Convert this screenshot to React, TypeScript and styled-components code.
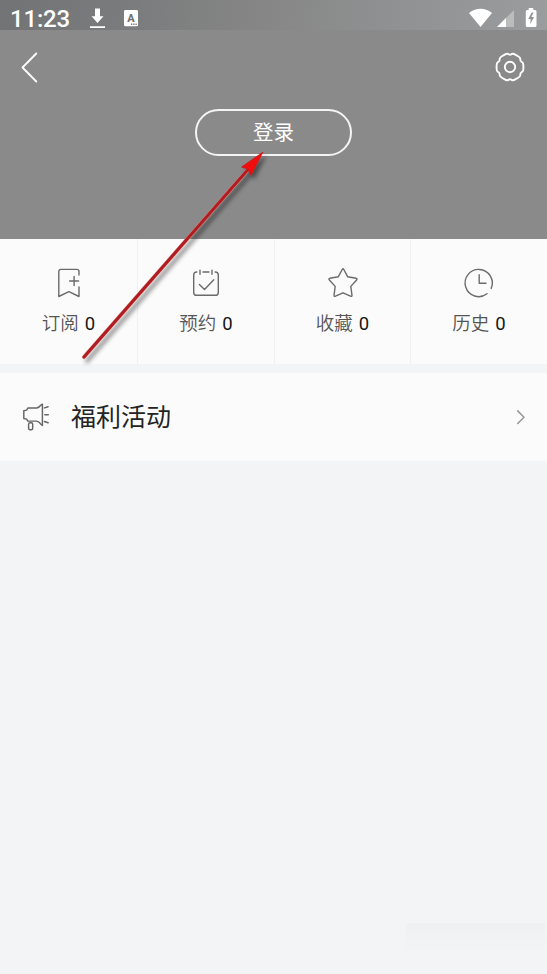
import React from 'react';
import styled, { createGlobalStyle } from 'styled-components';

const GlobalStyle = createGlobalStyle`
  * { box-sizing: border-box; }
  body {
    margin: 0;
    background: #f2f4f6;
    font-family: Roboto, "Noto Sans CJK SC", sans-serif;
  }
  svg { display: block; flex: none; overflow: visible; }
`;

const Screen = styled.main`
  position: relative;
  display: flex;
  flex-direction: column;
  width: 547px;
  height: 974px;
  overflow: hidden;
  background: #f2f4f6;
`;

const StatusBar = styled.header`
  display: flex;
  align-items: center;
  height: 30px;
  padding: 0 10px;
  background: linear-gradient(100deg, #727374 0%, #7b7c7d 25%, #868686 48%, #909192 72%, #9b9c9d 100%);
  color: #fff;
`;

const Clock = styled.span`
  width: 78px;
  padding-top: 8px;
  font-size: 24px;
  line-height: 30px;
  font-weight: 500;
  letter-spacing: -0.2px;
  white-space: nowrap;
`;

const StatusIcons = styled.div`
  display: flex;
  flex: 1;
  justify-content: space-between;
`;

const Hero = styled.section`
  display: flex;
  flex-direction: column;
  align-items: center;
  height: 209px;
  background: #8a8a8a;
`;

const NavBar = styled.nav`
  display: flex;
  align-items: center;
  justify-content: space-between;
  width: 100%;
  height: 74px;
  padding: 0 22px 1px 20px;
`;

const IconButton = styled.button`
  padding: 0;
  border: 0;
  background: none;
  color: #fff;
`;

const LoginButton = styled.button`
  width: 157px;
  height: 47px;
  margin-top: 5px;
  padding: 0;
  border: 2px solid #f4f4f4;
  border-radius: 24px;
  background: none;
  color: #fff;
  font: 400 20.5px/40px Roboto, "Noto Sans CJK SC", sans-serif;
`;

const Stats = styled.section`
  display: grid;
  grid-template-columns: 138px 137px 136px 136px;
  height: 125px;
  background: #fbfbfb;
`;

const Stat = styled.div`
  display: flex;
  flex-direction: column;
  align-items: center;
  padding-top: 28px;
  border-right: 1px solid #eff0f1;
  color: #6b6b6b;
  &:last-child { border-right: 0; }
`;

const StatLabel = styled.div`
  display: flex;
  gap: 6px;
  margin-top: 12px;
  font-size: 18.5px;
  line-height: 26px;
  font-weight: 350;
  color: #555;
`;

const Count = styled.span`
  color: #161616;
  font-weight: 400;
`;

const MenuRow = styled.section`
  display: flex;
  align-items: center;
  height: 88px;
  margin-top: 9px;
  padding: 0 21px 0 22px;
  background: #fbfbfb;
  color: #666;
`;

const MenuTitle = styled.span`
  flex: 1;
  margin-left: 21px;
  padding-top: 2px;
  font-size: 25px;
  line-height: 36px;
  color: #242424;
`;

const FadedPatch = styled.div`
  width: 139px;
  height: 48px;
  margin: auto 2px 3px auto;
  background: linear-gradient(#eef0f1, #f2f4f5 65%);
`;

const PointerArrow = styled.svg`
  position: absolute;
  top: 0;
  left: 0;
  pointer-events: none;
`;

const strokeProps = {
  fill: 'none',
  stroke: 'currentColor',
  strokeLinecap: 'round',
  strokeLinejoin: 'round',
} as const;

const gearPoints = Array.from({ length: 6 }, (_, lobe) =>
  [
    [-17, 14],
    [17, 14],
    [30, 12],
  ].map(([offset, radius]) => {
    const a = ((lobe * 60 + offset) * Math.PI) / 180;
    return [15 + radius * Math.cos(a), 15 + radius * Math.sin(a)];
  }),
).flat();

const gearPath =
  gearPoints
    .map(([x, y], i) => {
      const [px, py] = gearPoints[(i + gearPoints.length - 1) % gearPoints.length];
      const [nx, ny] = gearPoints[(i + 1) % gearPoints.length];
      const k = 0.36;
      const start = `${(x + (px - x) * k).toFixed(2)} ${(y + (py - y) * k).toFixed(2)}`;
      const end = `${(x + (nx - x) * k).toFixed(2)} ${(y + (ny - y) * k).toFixed(2)}`;
      return `${i ? 'L' : 'M'}${start}Q${x.toFixed(2)} ${y.toFixed(2)} ${end}`;
    })
    .join('') + 'Z';

const BackIcon = () => (
  <svg width="20" height="32" viewBox="0 0 20 32" {...strokeProps} strokeWidth="1.8">
    <path d="M16.3 2.5 2.5 16.5 16.3 30.5" />
  </svg>
);

const GearIcon = () => (
  <svg width="30" height="30" viewBox="0 0 30 30" {...strokeProps} strokeWidth="1.9">
    <path d={gearPath} />
    <circle cx="15" cy="15" r="5.2" />
  </svg>
);

const BookmarkIcon = () => (
  <svg width="28" height="32" viewBox="0 0 28 32" {...strokeProps} strokeWidth="1.4">
    <path d="M24 8V4.5Q24 2.4 21.8 2.4H6Q3.8 2.4 3.8 4.6V29.5L13.9 24.6 24 29.5V20M19.1 9.5V18.5M14.6 14H23.6" />
  </svg>
);

const CalendarIcon = () => (
  <svg width="28" height="32" viewBox="0 0 28 32" {...strokeProps} strokeWidth="1.4">
    <path d="M4.8 5Q1.7 5 1.7 8.1V25.4Q1.7 28.3 4.6 28.3H23.4Q26.3 28.3 26.3 25.4V8.1Q26.3 5 23.2 5M11 5H17M8 3.1V7.3M20 3.1V7.3M7.4 17.6 12.5 22.6 21.8 12.8" />
  </svg>
);

const StarIcon = () => (
  <svg width="30" height="32" viewBox="0 0 30 32" {...strokeProps} strokeWidth="1.4">
    <path d="M14.2 2.5Q15 1 15.8 2.5L19.6 9.7 28.2 11.3Q29.8 11.8 28.6 13L22.8 19.4 24 28.3Q24 29.9 22.5 29.2L15 25.8 7.5 29.2Q6 29.9 6 28.3L7.2 19.4 1.4 13Q.2 11.8 1.8 11.3L10.4 9.7Z" />
  </svg>
);

const HistoryIcon = () => (
  <svg width="28" height="32" viewBox="0 0 28 32" {...strokeProps} strokeWidth="1.4">
    <path d="M22 26.8A13.6 13.6 0 1 1 26.2 21.4M14.2 7.7V16.3H21" />
  </svg>
);

const MegaphoneIcon = () => (
  <svg width="28" height="30" viewBox="0 0 28 30" {...strokeProps} strokeWidth="1.45">
    <path d="M6 6H14.7Q17.5 5.3 18.8 3.1L20.4 2.2V23.5L18.8 22.2Q17.5 19.9 14.7 19.1H5.8L4.6 17.1 1.8 16.5V8.7L4.6 8.1ZM22.4 5.9 26.1 4.8M22.8 12.8H26.3M22.4 19.5 26.1 20.7" />
    <rect x="6.6" y="20.8" width="4.1" height="7" rx="1.5" />
  </svg>
);

const ChevronIcon = () => (
  <svg width="10" height="16" viewBox="0 0 10 16" {...strokeProps} stroke="#999" strokeWidth="1.6">
    <path d="M1.7 1.9 8 8.2 1.7 14.5" />
  </svg>
);

const NotificationIcons = () => (
  <svg width="52" height="30" viewBox="88 0 52 30" fill="#fff">
    <path d="M95 8.5H100V16.2H103.5L97.5 23 91.5 16.2H95ZM90 26.3H105V28H90Z" />
    <rect x="124" y="10" width="14" height="16.3" rx="1.4" />
    <text x="130.9" y="22" textAnchor="middle" fill="#707070" fontFamily="Roboto" fontSize="11" fontWeight="800">A</text>
    <path d="M131 23.6H132.3V24.9H131ZM133.3 23.6H134.6V24.9H133.3ZM135.5 23.6H136.8V24.9H135.5Z" fill="#777" />
  </svg>
);

const SystemIcons = () => (
  <svg width="70" height="30" viewBox="467 0 70 30" fill="#fff">
    <path d="M469 13Q480.5 4.7 492 13L480.5 27Z" />
    <path d="M514 10V27H497Z" opacity=".34" />
    <path d="M506 18V27H497Z" />
    <path d="M528.7 8H533.3V10H535Q536.5 10 536.5 11.5V25.5Q536.5 27 535 27H527.3Q525.8 27 525.8 25.5V11.5Q525.8 10 527.3 10H528.7Z" />
    <path d="M531.7 12.6 528.3 18.9H530.7L530.2 24.2 534 17H531.4L533.6 12.6Z" fill="#929292" />
  </svg>
);

const stats = [
  { label: '订阅', icon: <BookmarkIcon /> },
  { label: '预约', icon: <CalendarIcon /> },
  { label: '收藏', icon: <StarIcon /> },
  { label: '历史', icon: <HistoryIcon /> },
];

export default function App() {
  return (
    <>
      <GlobalStyle />
      <Screen>
        <StatusBar>
          <Clock>11:23</Clock>
          <StatusIcons>
            <NotificationIcons />
            <SystemIcons />
          </StatusIcons>
        </StatusBar>
        <Hero>
          <NavBar>
            <IconButton aria-label="返回"><BackIcon /></IconButton>
            <IconButton aria-label="设置"><GearIcon /></IconButton>
          </NavBar>
          <LoginButton>登录</LoginButton>
        </Hero>
        <Stats>
          {stats.map(({ label, icon }) => (
            <Stat key={label}>
              {icon}
              <StatLabel>{label}<Count>0</Count></StatLabel>
            </Stat>
          ))}
        </Stats>
        <MenuRow>
          <MegaphoneIcon />
          <MenuTitle>福利活动</MenuTitle>
          <ChevronIcon />
        </MenuRow>
        <FadedPatch />
        <PointerArrow width="547" height="400" viewBox="0 0 547 400">
          <defs>
            <filter id="arrowShadow" x="-20%" y="-20%" width="150%" height="150%">
              <feDropShadow dx="3" dy="4" stdDeviation="2.2" floodColor="#000" floodOpacity=".45" />
            </filter>
          </defs>
          <g filter="url(#arrowShadow)">
            <path d="M84 357 248 169.5" stroke="#d98583" strokeWidth="3.8" strokeLinecap="round" />
            <path d="M84 357 248 169.5" stroke="#b01f20" strokeWidth="3" strokeLinecap="round" />
            <path d="M263 152 241.5 167 248 169.3 251 175.3Z" fill="#f00b0b" stroke="#c81818" strokeWidth=".7" />
          </g>
        </PointerArrow>
      </Screen>
    </>
  );
}
